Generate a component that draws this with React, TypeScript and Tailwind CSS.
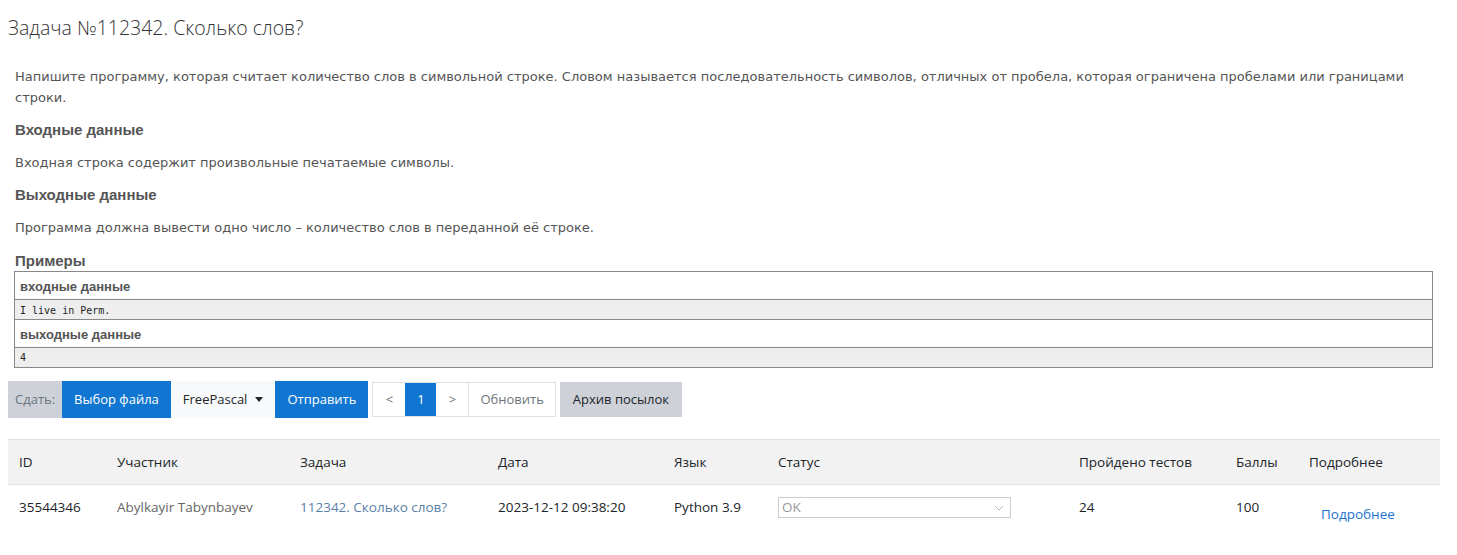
import React from "react";

const ui = "font-['Open_Sans',sans-serif]";
const verdana = "font-['DejaVu_Sans',sans-serif]";
const arial = "font-['Liberation_Sans',Arial,sans-serif]";

const Statement = () => (
  <div className={`${verdana} px-[15px] pt-[24px] text-[13px] leading-[21px] text-[#555]`}>
    <p className="pr-[38px]">
      Напишите программу, которая считает количество слов в символьной строке. Словом называется
      последовательность символов, отличных от пробела, которая ограничена пробелами или границами
      строки.
    </p>
    <h3 className={`${arial} mt-[11px] text-[15px] font-bold text-[#555]`}>Входные данные</h3>
    <p className="mt-[12px]">Входная строка содержит произвольные печатаемые символы.</p>
    <h3 className={`${arial} mt-[11px] text-[15px] font-bold text-[#555]`}>Выходные данные</h3>
    <p className="mt-[12px]">Программа должна вывести одно число – количество слов в переданной её строке.</p>
    <h3 className={`${arial} mt-[13px] text-[15px] font-bold leading-[20px] text-[#555]`}>Примеры</h3>
  </div>
);

const Examples = () => (
  <div className="ml-[14px] mr-[24px] border border-[#888]">
    <div className={`${arial} h-[27px] px-[5px] pt-[5px] text-[13px] font-bold text-[#555]`}>входные данные</div>
    <div className="h-[21px] border-y border-[#888] bg-[#eee] px-[5px] pt-[3px] font-['DejaVu_Sans_Mono',monospace] text-[10px] text-[#222]">
      I live in Perm.
    </div>
    <div className={`${arial} h-[27px] px-[5px] pt-[5px] text-[13px] font-bold text-[#555]`}>выходные данные</div>
    <div className="h-[20px] border-t border-[#888] bg-[#eee] px-[5px] pt-[2px] font-['DejaVu_Sans_Mono',monospace] text-[10px] text-[#222]">
      4
    </div>
  </div>
);

const Toolbar = () => (
  <div className={`${ui} mt-[13px] flex items-center px-[8px] text-[13px]`}>
    <div className="flex h-[37px] items-stretch">
      <span className="flex items-center bg-[#ced2d8] px-[7px] text-[#6c757d]">Сдать:</span>
      <button className="flex items-center bg-[#1176d1] px-[12px] text-white">Выбор файла</button>
      <button className="flex items-center gap-[8px] bg-[#f8f9fa] px-[12px] text-[#212529]">
        FreePascal
        <span className="h-0 w-0 border-x-[4px] border-t-[5px] border-x-transparent border-t-[#212529]" />
      </button>
      <button className="flex items-center bg-[#1176d1] px-[12px] text-white">Отправить</button>
    </div>
    <div className="ml-[4px] flex h-[35px] items-stretch border border-[#dee2e6]">
      <span className="flex w-[32px] items-center justify-center text-[#6c757d]">&lt;</span>
      <span className="flex w-[31px] items-center justify-center bg-[#1176d1] text-white">1</span>
      <span className="flex w-[33px] items-center justify-center border-r border-[#dee2e6] text-[#6c757d]">&gt;</span>
      <span className="flex items-center px-[11px] text-[#6c757d]">Обновить</span>
    </div>
    <button className="ml-[4px] flex h-[35px] items-center bg-[#ced2d8] px-[13px] text-[#212529]">Архив посылок</button>
  </div>
);

const cols = [
  { label: "ID", w: "w-[98px]" },
  { label: "Участник", w: "w-[183px]" },
  { label: "Задача", w: "w-[198px]" },
  { label: "Дата", w: "w-[176px]" },
  { label: "Язык", w: "w-[104px]" },
  { label: "Статус", w: "w-[301px]" },
  { label: "Пройдено тестов", w: "w-[157px]" },
  { label: "Баллы", w: "w-[73px]" },
  { label: "Подробнее", w: "flex-1" },
];

const Results = () => (
  <div className={`${ui} mx-[8px] mt-[21px] mr-[17px] text-[13.5px] text-[#212529]`}>
    <div className="flex h-[46px] items-center border-y border-[#dee2e6] bg-[#f2f2f2] pl-[11px]">
      {cols.map((c) => (
        <div key={c.label} className={c.w}>
          {c.label}
        </div>
      ))}
    </div>
    <div className="flex h-[45px] items-start pl-[11px] pt-[12px]">
      <div className="w-[98px]">35544346</div>
      <div className="w-[183px] text-[#666]">Abylkayir Tabynbayev</div>
      <div className="w-[198px] text-[#5a7fa8]">112342. Сколько слов?</div>
      <div className="w-[176px]">2023-12-12 09:38:20</div>
      <div className="w-[104px]">Python 3.9</div>
      <div className="w-[301px]">
        <div className="flex h-[21px] w-[233px] items-center justify-between border border-[#ccc] pl-[3px] pr-[6px] text-[#999]">
          OK
          <svg width="10" height="6" viewBox="0 0 10 6" fill="none" stroke="#bbb" strokeWidth="1">
            <path d="M1 1l4 4 4-4" />
          </svg>
        </div>
      </div>
      <div className="w-[157px]">24</div>
      <div className="w-[73px]">100</div>
      <div className="flex-1 pl-[12px] pt-[7px] text-[#1a73d1]">Подробнее</div>
    </div>
  </div>
);

export default function App() {
  return (
    <div className="min-h-[555px] bg-white">
      <h1 className={`${ui} px-[8px] pt-[14px] text-[19.5px] font-light leading-[28px] text-[#333]`}>
        Задача №112342. Сколько слов?
      </h1>
      <Statement />
      <Examples />
      <Toolbar />
      <Results />
    </div>
  );
}
